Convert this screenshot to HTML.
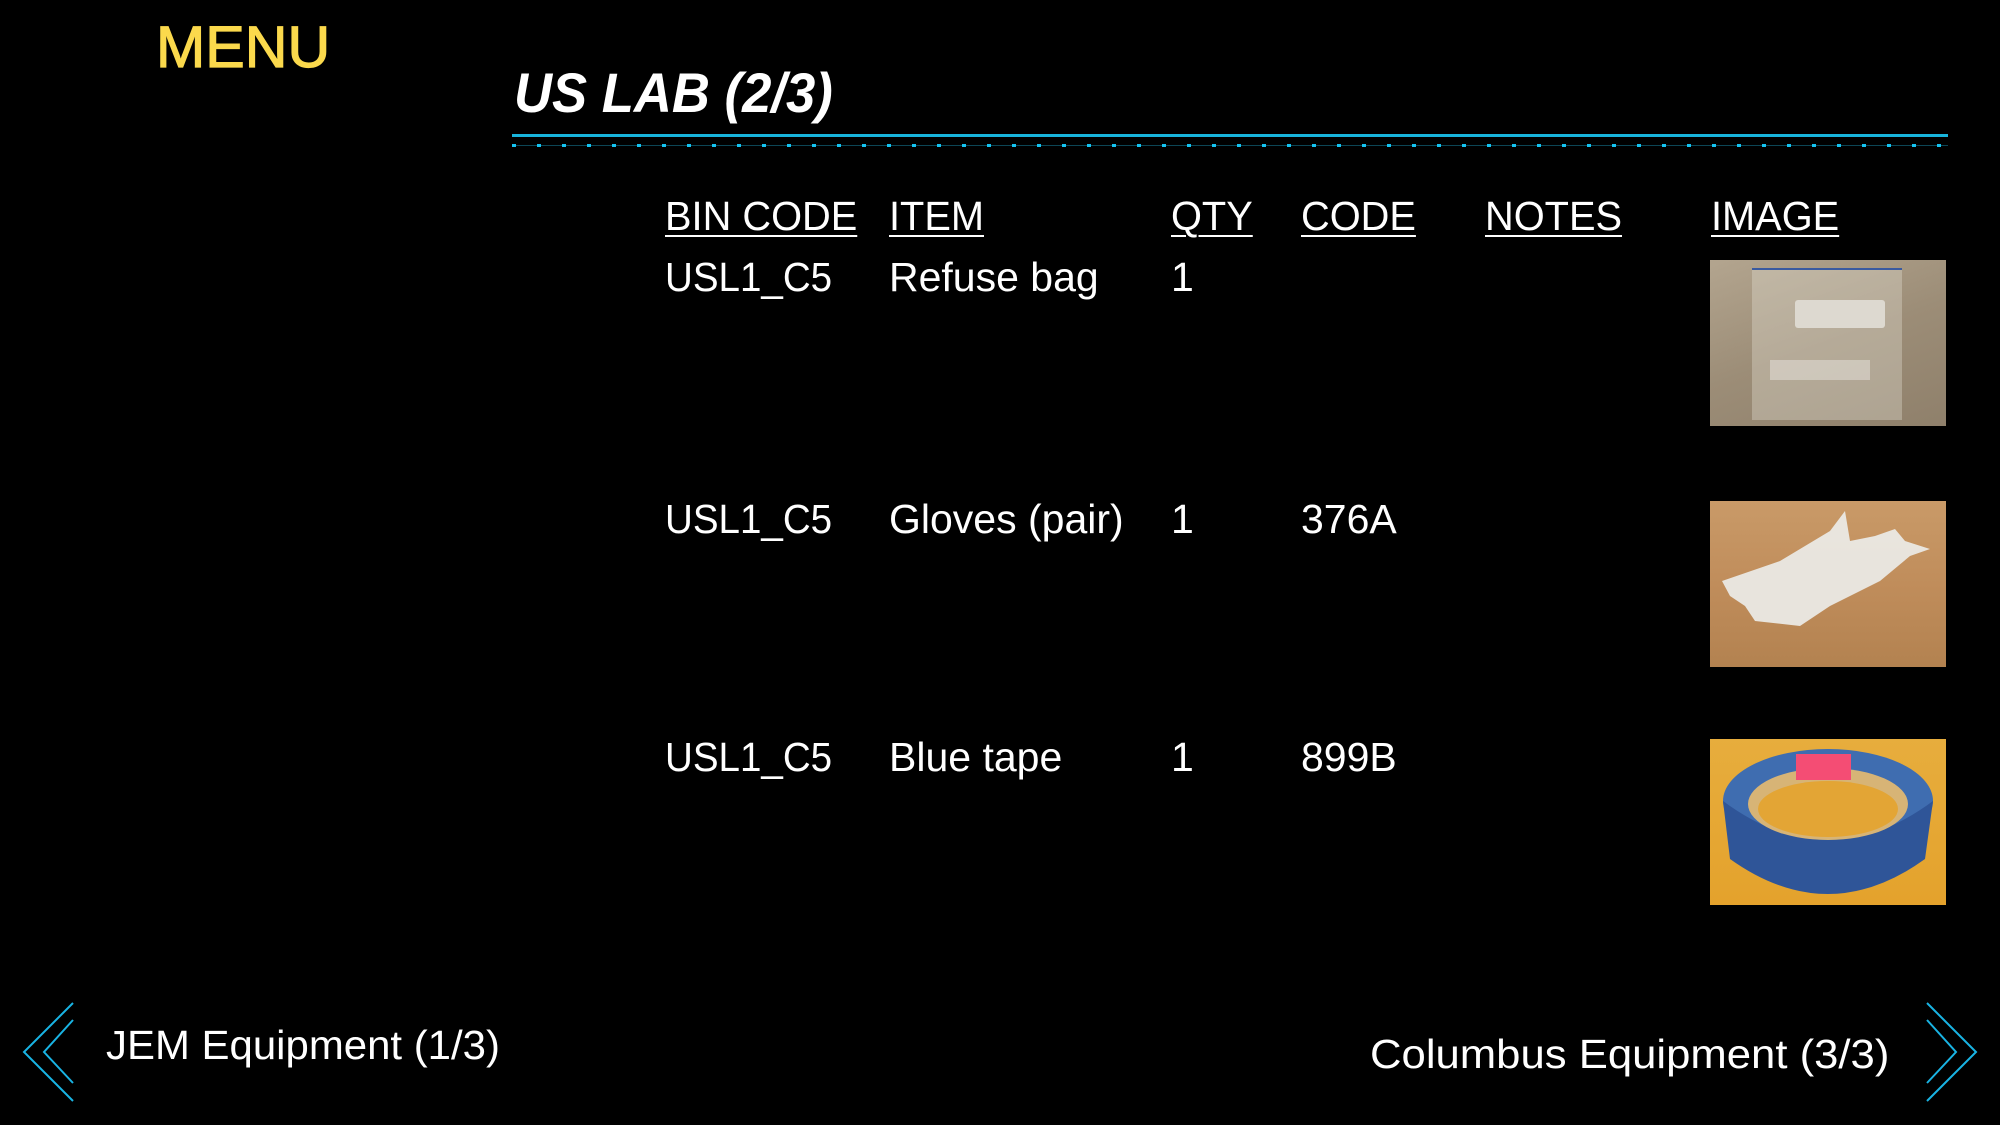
<!DOCTYPE html>
<html><head><meta charset="utf-8"><style>
html,body{margin:0;padding:0;background:#000;width:2000px;height:1125px;overflow:hidden;position:relative}
body{font-family:"Liberation Sans",sans-serif;color:#fff}
.t{position:absolute;line-height:1;white-space:nowrap;transform-origin:left top}
.h{font-size:41px;text-decoration:underline;text-decoration-thickness:2px;text-underline-offset:5px;transform:scaleX(.97)}
.r{font-size:41px}
.u{transform:scaleX(.94)}
.img{position:absolute;width:236px;height:166px;overflow:hidden}
</style></head><body>
<div class="t" style="left:156px;top:19px;font-size:58px;color:#fbd94c;-webkit-text-stroke:1.2px #fbd94c;transform:scaleX(1.02)">MENU</div>
<div class="t" style="left:514px;top:65px;font-size:56px;font-weight:bold;font-style:italic;transform:scaleX(.94)">US LAB (2/3)</div>
<div style="position:absolute;left:512px;top:134px;width:1436px;height:3px;background:#18b4dc"></div>
<div style="position:absolute;left:512px;top:145px;width:1436px;height:1px;background:#0c4656"></div>
<div style="position:absolute;left:512px;top:144px;width:1436px;height:3px;background:repeating-linear-gradient(90deg,#15c3f0 0 4px,transparent 4px 25px)"></div>

<div class="t h" style="left:665px;top:196px">BIN CODE</div>
<div class="t h" style="left:889px;top:196px">ITEM</div>
<div class="t h" style="left:1171px;top:196px">QTY</div>
<div class="t h" style="left:1301px;top:196px">CODE</div>
<div class="t h" style="left:1485px;top:196px">NOTES</div>
<div class="t h" style="left:1711px;top:196px">IMAGE</div>

<div class="t r u" style="left:665px;top:257px">USL1_C5</div>
<div class="t r" style="left:889px;top:257px">Refuse bag</div>
<div class="t r" style="left:1171px;top:257px">1</div>

<div class="t r u" style="left:665px;top:499px">USL1_C5</div>
<div class="t r" style="left:889px;top:499px">Gloves (pair)</div>
<div class="t r" style="left:1171px;top:499px">1</div>
<div class="t r" style="left:1301px;top:499px">376A</div>

<div class="t r u" style="left:665px;top:737px">USL1_C5</div>
<div class="t r" style="left:889px;top:737px">Blue tape</div>
<div class="t r" style="left:1171px;top:737px">1</div>
<div class="t r" style="left:1301px;top:737px">899B</div>

<div class="img" style="left:1710px;top:260px;background:linear-gradient(160deg,#b3a58f,#9c8d77 50%,#8f806b)">
<div style="position:absolute;left:42px;top:8px;width:150px;height:150px;background:rgba(230,225,215,.35);border-top:2px solid #3a5aa0"></div>
<div style="position:absolute;left:85px;top:40px;width:90px;height:28px;background:#ddd9d0;border-radius:3px"></div>
<div style="position:absolute;left:60px;top:100px;width:100px;height:20px;background:rgba(255,255,255,.35)"></div>
</div>
<div class="img" style="left:1710px;top:501px;background:linear-gradient(180deg,#c99a68,#c08d5b 50%,#b38250)">
<svg width="236" height="166" style="position:absolute;left:0;top:0"><path d="M12 80 L70 60 L120 30 L135 10 L140 40 L165 35 L185 28 L195 40 L220 48 L200 55 L170 80 L120 105 L90 125 L45 120 L35 105 L20 95 Z" fill="#ecebe8" opacity=".92"/></svg>
</div>
<div class="img" style="left:1710px;top:739px;background:linear-gradient(180deg,#e7ad3d,#e4a22c)">
<svg width="236" height="166" style="position:absolute;left:0;top:0"><ellipse cx="118" cy="62" rx="105" ry="52" fill="#3f6db0"/><path d="M13 62 L20 120 Q118 190 215 120 L223 62 Q118 140 13 62Z" fill="#2f5598"/><ellipse cx="118" cy="65" rx="80" ry="36" fill="#d7b476"/><ellipse cx="118" cy="70" rx="70" ry="28" fill="#e3a535"/><rect x="86" y="15" width="55" height="26" fill="#f44d74"/></svg>
</div>

<svg style="position:absolute;left:0;top:995px" width="100" height="115"><g fill="none" stroke="#19b4e4" stroke-width="2"><path d="M73 8 L24 57 L73 106"/><path d="M73 25 L44 57 L73 88"/></g></svg>
<div class="t" style="left:106px;top:1025px;font-size:41px;transform:scaleX(1.023)">JEM Equipment (1/3)</div>
<div class="t" style="left:1370px;top:1034px;font-size:41px;transform:scaleX(1.065)">Columbus Equipment (3/3)</div>
<svg style="position:absolute;left:1900px;top:995px" width="100" height="115"><g fill="none" stroke="#19b4e4" stroke-width="2"><path d="M27 8 L76 57 L27 106"/><path d="M27 25 L56 57 L27 88"/></g></svg>
</body></html>
